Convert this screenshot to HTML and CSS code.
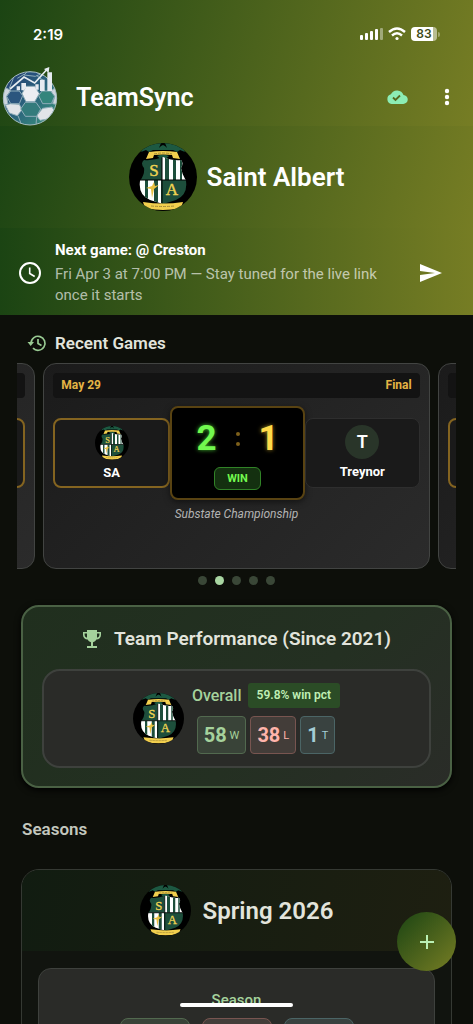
FILE: index.html
```html
<!DOCTYPE html>
<html lang="en">
<head>
  <meta charset="utf-8">
  <meta name="viewport" content="width=device-width, initial-scale=1">
  <title>TeamSync</title>
  <link rel="stylesheet" href="styles.css">
</head>
<body>

<div class="app">
  <header class="topbar">
    <div class="status">
      <span class="time">2:19</span>
      <div class="status-icons">
        <svg width="24" height="14" viewBox="0 0 24 14" fill="#fff"><rect x="1" y="8" width="3" height="5" rx="1"/><rect x="6" y="6" width="3" height="7" rx="1"/><rect x="11" y="4" width="3" height="9" rx="1"/><rect x="16" y="2" width="3" height="11" rx="1"/><rect x="21" y="1" width="3" height="12" rx="1" opacity=".4"/></svg>
        <svg width="18" height="14" viewBox="0 0 18 14" fill="none" stroke="#fff" stroke-width="2.4"><path d="M1 5 Q9 -2 17 5M4 8.500 Q9 4 14 8.500"/><circle cx="9" cy="11.500" r="1.600" fill="#fff" stroke="none"/></svg>
        <div class="battery"><span>83</span></div>
      </div>
    </div>
    <div class="appbar">
      <svg class="ball" viewBox="0 6 192 192" aria-label="TeamSync logo">
        <defs>
          <linearGradient id="ball-fill" x1="0" y1="0" x2="1" y2="1"><stop offset="0" stop-color="#233a72"/><stop offset=".5" stop-color="#2a627c"/><stop offset="1" stop-color="#3d9a7c"/></linearGradient>
          <clipPath id="ball-clip"><circle cx="90" cy="106" r="80"/></clipPath>
        </defs>
        <circle cx="90" cy="106" r="80" fill="url(#ball-fill)"/>
        <g clip-path="url(#ball-clip)" stroke="#8fadb9" stroke-width="3" stroke-linejoin="round">
          <path d="M8 70l24 12-12 18 4 24-16 4zM172 70l-20 14 12 18-6 20 20 4z" fill="#cdd5de"/>
          <path d="M32 122l26 2 8 16-14 18-24-8-12-24zM128 136l28-4 6 10-18 26-24 4-10-14z" fill="#e1e4e8"/>
          <path d="M78 70h26l14 22-14 24H78L66 92z" fill="#eceef2"/>
          <path d="M32 84h26l10 14-10 24H32L20 100z" fill="#2b567e"/>
          <path d="M126 84h26l12 16-10 22h-26l-12-24z" fill="#34857c"/>
          <path d="M76 118h32l14 20-12 22H76l-14-22z" fill="#337b7c"/>
          <path d="M54 158l10 26M110 160l-2 26M52 46l20-12 36 2 24 18M40 46l-12 30" fill="none"/>
          <path d="M72 36l10-10h24l14 8-14 6z" fill="#27517c"/>
        </g>
        <circle cx="90" cy="106" r="80" fill="none" stroke="#a6bcc0" stroke-width="3"/>
        <path d="M50 70h10v12H50zM64 60h14v14l-6 8h-8zM106 64h10v16h-10zM120 50h14v34h-14zM142 28h14v56h-14z" fill="#e5eaf0"/>
        <path d="M30 78L72 42l32 18 38-42" fill="none" stroke="#e6ecf0" stroke-width="5"/>
        <path d="M132 18l16-6-2 18z" fill="#e6ecf0"/>
      </svg>
      <h1 class="app-name">TeamSync</h1>
      <button class="icon-btn" aria-label="Synced">
        <svg width="22" height="16" viewBox="0 0 22 16"><path d="M5.500 15a5 5 0 0 1-.6-9.700A6.800 6.800 0 0 1 17.500 6 4.500 4.500 0 0 1 17 15z" fill="#8cedb5"/><path d="M7 8.500l2.500 2.500 4.500-4.500" fill="none" stroke="#566a20" stroke-width="1.800"/></svg>
      </button>
      <button class="icon-btn" aria-label="More">
        <svg width="6" height="18" viewBox="0 0 6 18" fill="#fff"><circle cx="3" cy="3" r="2.200"/><circle cx="3" cy="9" r="2.200"/><circle cx="3" cy="15" r="2.200"/></svg>
      </button>
    </div>
  </header>

  <section class="team">
    <svg class="crest-lg" viewBox="0 0 68 68">
      <defs>
        <clipPath id="crest-round"><circle cx="34" cy="34" r="34"/></clipPath>
        <clipPath id="crest-shield"><path d="M15 17 Q24 18 34 14 Q44 18 52 17 Q55 20 52 25 Q53 31 57 38 Q59 52 47 57 L34 61 L21 57 Q9 52 11 38 Q16 31 15 25 Q11 20 15 17Z"/></clipPath>
      </defs>
      <g id="crest" clip-path="url(#crest-round)">
        <rect width="68" height="68" fill="#000"/>
        <path d="M12 9 L17 0 H51 L56 9 L51 7 L48 9 L44 7 H24 L20 9 L17 7Z" fill="#1d5942"/>
        <path d="M30 5 L32 0 H36 L38 5 L36 3 L34 2 L32 3Z" fill="#000"/>
        <path d="M28 13 Q34 10 40 13 L34 18Z" fill="#1d5942"/>
        <g clip-path="url(#crest-shield)">
          <rect x="8" y="12" width="26" height="25" fill="#1d4e3b"/>
          <rect x="33" y="12" width="26" height="25" fill="#fff"/>
          <path d="M36 12h4v25h-4zM44 12h3v25h-3zM51 12h2v25h-2z" fill="#1d4e3b"/>
          <rect x="8" y="37" width="26" height="26" fill="#fff"/>
          <path d="M16 37h3v26h-3zM25 37h4v26h-4zM32 37h2v26h-2z" fill="#1d4e3b"/>
          <rect x="33" y="37" width="26" height="26" fill="#1d4e3b"/>
          <path d="M8 37H60M33 12V62" stroke="#000" stroke-width="1"/>
        </g>
        <path d="M17 45 L23 43 L25 39 L26 43 L30 42 L25 46 L23 55 L22 46Z" fill="#e8c040"/>
        <path d="M17 16 L20 9 Q34 7 48 9 L51 16 L44 15 L43 12 Q34 11 25 12 L24 15Z" fill="#f2cf4e"/>
        <path d="M14 59 Q34 62 54 59 L52 65 Q34 69 16 65Z" fill="#f2cf4e"/>
        <path d="M22 63 Q34 64 46 63M25 11 Q34 9 43 11" fill="none" stroke="#a38b3a" stroke-dasharray="3 1"/>
        <text x="25" y="33" class="crest-letter">S</text>
        <text x="43" y="52" class="crest-letter">A</text>
      </g>
    </svg>
    <h2>Saint Albert</h2>
  </section>

  <section class="next">
    <svg class="clock" viewBox="0 0 24 24" fill="none" stroke="#fff" stroke-width="2"><circle cx="12" cy="12" r="10"/><path d="M11.700 6.500v6l5 3" stroke-width="1.600"/></svg>
    <div class="next-text">
      <strong>Next game: @ Creston</strong>
      <p>Fri Apr 3 at 7:00 PM — Stay tuned for the live link once it starts</p>
    </div>
    <button class="icon-btn send" aria-label="Send">
      <svg width="24" height="20" viewBox="0 0 24 20"><path d="M1 19l22-9L1 1v7l15 2-15 2z" fill="#fff"/></svg>
    </button>
  </section>

  <main class="content">
    <div class="section-title">
      <svg width="20" height="18" viewBox="0 0 20 18" fill="none" stroke="#99cb93" stroke-width="1.700"><path d="M4 9a7 7 0 1 1 2 5.200"/><path d="M0.500 8h6.500L3.700 12z" fill="#99cb93" stroke="none"/><path d="M11 5v4.500l3.500 2"/></svg>
      <h3>Recent Games</h3>
    </div>

    <div class="carousel">
      <article class="game">
        <div class="game-head"></div>
        <div class="match"><div class="side winner"></div><div class="side winner"></div></div>
      </article>
      <article class="game">
        <div class="game-head"><span>May 29</span><span>Final</span></div>
        <div class="match">
          <div class="side winner">
            <svg class="crest-sm" viewBox="0 0 68 68"><use href="#crest"/></svg>
            <b>SA</b>
          </div>
          <div class="scoreboard">
            <div class="score"><span class="ours">2</span><span class="colon"><i></i><i></i></span><span class="theirs">1</span></div>
            <span class="result">WIN</span>
          </div>
          <div class="side">
            <span class="initial">T</span>
            <b>Treynor</b>
          </div>
        </div>
        <p class="note">Substate Championship</p>
      </article>
      <article class="game">
        <div class="game-head"></div>
        <div class="match"><div class="side winner"></div><div class="side"></div></div>
      </article>
    </div>
    <div class="dots"><i></i><i class="on"></i><i></i><i></i><i></i></div>

    <section class="performance">
      <div class="perf-title">
        <svg width="20" height="20" viewBox="0 0 20 20"><path d="M5 1h10v2h4v3a4.500 4.500 0 0 1-4.600 4.500A5 5 0 0 1 11 13.300V17h4v2H5v-2h4v-3.700A5 5 0 0 1 5.600 10.500 4.500 4.500 0 0 1 1 6V3h4zM2.600 4.600V6A2.800 2.800 0 0 0 5 8.700V4.600zM17.400 4.600H15v4.100A2.800 2.800 0 0 0 17.400 6z" fill="#a5d29c" fill-rule="evenodd"/></svg>
        <h3>Team Performance (Since 2021)</h3>
      </div>
      <div class="overall">
        <svg class="crest-md" viewBox="0 0 68 68"><use href="#crest"/></svg>
        <div class="record">
          <div class="record-head"><span>Overall</span><span class="pct">59.8% win pct</span></div>
          <div class="tiles">
            <span class="tile win"><b>58</b>W</span>
            <span class="tile loss"><b>38</b>L</span>
            <span class="tile tie"><b>1</b>T</span>
          </div>
        </div>
      </div>
    </section>

    <h3 class="seasons-title">Seasons</h3>

    <section class="season">
      <div class="season-head">
        <svg class="crest-md" viewBox="0 0 68 68"><use href="#crest"/></svg>
        <h2>Spring 2026</h2>
      </div>
      <div class="season-card">
        <span>Season</span>
        <div class="season-tiles"><i class="win"></i><i class="loss"></i><i class="tie"></i></div>
      </div>
    </section>
  </main>

  <button class="fab" aria-label="Add">
    <svg width="16" height="16" viewBox="0 0 16 16" stroke="#baf0b4" stroke-width="2"><path d="M8 1v14M1 8h14"/></svg>
  </button>
  <div class="home-bar"></div>
</div>

</body>
</html>
```
FILE: styles.css
```css
* {
  box-sizing: border-box;
}
body {
  margin: 0;
  background: #0d0f0a;
  color: #e2e4dc;
  font-family: Roboto, "Liberation Sans", sans-serif;
  font-size: 14px;
}
h1, h2, h3, p {
  margin: 0;
  font-weight: 600;
}
button {
  border: 0;
  padding: 0;
  background: none;
}
svg {
  display: block;
  flex: none;
}
.crest-letter {
  font: 400 17px "Liberation Serif", serif;
  fill: #f0d452;
  stroke: #f0d452;
  stroke-width: 0.4;
  text-anchor: middle;
}

.app {
  height: 100vh;
  display: flex;
  flex-direction: column;
  overflow: hidden;
}

/* header */
.topbar {
  background: linear-gradient(105deg, #1b4413, #767d24);
}
.status {
  display: flex;
  justify-content: space-between;
  align-items: center;
  height: 68px;
  padding: 0 33px;
}
.time {
  font: 600 15px Inter, sans-serif;
  color: #fff;
}
.status-icons {
  display: flex;
  align-items: center;
  gap: 5px;
}
.battery {
  display: flex;
  align-items: center;
  gap: 1px;
}
.battery span {
  width: 26px;
  height: 14px;
  border-radius: 4px;
  background: linear-gradient(90deg, #fff 83%, #b9bd92 83%);
  color: #3c4a16;
  font: 600 12px/14px Inter, sans-serif;
  text-align: center;
}
.battery::after {
  content: "";
  width: 2px;
  height: 5px;
  border-radius: 0 2px 2px 0;
  background: #a0a56b;
}
.appbar {
  display: flex;
  align-items: center;
  height: 58px;
  padding-right: 4px;
}
.ball {
  width: 64px;
  height: 64px;
}
.app-name {
  flex: 1;
  padding-left: 12px;
  color: #fff;
  font-size: 25px;
}
.icon-btn {
  display: grid;
  place-items: center;
  width: 44px;
  height: 48px;
}
.icon-btn + .icon-btn {
  margin-left: 6px;
}
.team {
  display: flex;
  justify-content: center;
  align-items: center;
  gap: 10px;
  height: 102px;
  background: linear-gradient(105deg, #1b4413, #767d24);
}
.team h2 {
  color: #fff;
  font-size: 26px;
}
.crest-lg {
  width: 68px;
  height: 68px;
}
.next {
  display: flex;
  align-items: center;
  gap: 13px;
  padding: 12px 18px 9px;
  background: linear-gradient(90deg, #1b4413, #767d24);
}
.clock {
  width: 24px;
  height: 24px;
}
.next-text {
  flex: 1;
  color: #fff;
  font-size: 15px;
  line-height: 21px;
}
.next-text p {
  margin-top: 3px;
  color: rgba(255, 255, 255, 0.65);
  font-weight: 400;
}
.send {
  width: 48px;
}

/* recent games */
.content {
  flex: 1;
  min-height: 0;
  overflow: hidden;
}
.section-title {
  display: flex;
  align-items: center;
  gap: 8px;
  padding: 18px 27px 10px;
}
.section-title h3 {
  font-size: 17px;
  line-height: 20px;
}
.carousel {
  display: flex;
  justify-content: center;
  gap: 8px;
  margin: 0 17px;
  overflow: hidden;
}
.game {
  flex: 0 0 88%;
  height: 206px;
  padding: 9px;
  border: 1px solid #424442;
  border-radius: 13px;
  background: linear-gradient(135deg, #1b1b1b, #2b2b2b);
}
.game-head {
  display: flex;
  justify-content: space-between;
  height: 25px;
  padding: 0 8px;
  border-radius: 4px;
  background: #131313;
  color: #e4b445;
  font-size: 12px;
  font-weight: 700;
  line-height: 25px;
}
.match {
  display: flex;
  align-items: center;
  height: 109px;
}
.side {
  flex: 1;
  display: flex;
  flex-direction: column;
  align-items: center;
  gap: 5px;
  height: 70px;
  padding-top: 6px;
  border: 1px solid #2e2e2e;
  border-radius: 8px;
  background: #1a1a1a;
  color: #fff;
  font-size: 13px;
}
.side.winner {
  border: 2px solid #846420;
}
.crest-sm,
.initial {
  width: 34px;
  height: 34px;
}
.initial {
  border-radius: 50%;
  background: #293529;
  font-size: 18px;
  font-weight: 600;
  line-height: 34px;
  text-align: center;
}
.scoreboard {
  width: 135px;
  height: 94px;
  padding: 11px 0;
  border: 2px solid #594312;
  border-radius: 8px;
  background: #000;
  box-shadow: 0 2px 6px rgba(0, 0, 0, 0.5);
  text-align: center;
}
.score {
  display: flex;
  justify-content: center;
  align-items: center;
  gap: 19px;
  height: 40px;
  font: 700 35px/40px Roboto, sans-serif;
}
.ours {
  color: #72f94f;
  text-shadow: 0 0 4px #42b82e;
}
.theirs {
  color: #ffdb49;
  text-shadow: 0 0 4px #a5891f;
}
.colon i {
  display: block;
  width: 4px;
  height: 4px;
  margin: 6px 0;
  border-radius: 50%;
  background: #7e601b;
}
.result {
  display: inline-block;
  padding: 0 12px;
  margin-top: 8px;
  border: 1px solid #318327;
  border-radius: 6px;
  background: #143010;
  color: #72f94f;
  font-size: 11px;
  font-weight: 700;
  line-height: 21px;
}
.note {
  color: #b3b3b3;
  font-size: 12px;
  font-style: italic;
  font-weight: 400;
  text-align: center;
}
.dots {
  display: flex;
  justify-content: center;
  gap: 8px;
  padding: 7px 0 8px;
}
.dots i {
  width: 9px;
  height: 9px;
  border-radius: 50%;
  background: #3a4737;
}
.dots .on {
  background: #a9d6a2;
}

/* performance */
.performance {
  margin: 12px 21px 0;
  padding: 20px 19px 18px;
  border: 2px solid #4a6144;
  border-radius: 18px;
  background: linear-gradient(135deg, #202f1e, #243022 60%, #2a2c28);
  box-shadow: 0 2px 6px #000;
}
.perf-title {
  display: flex;
  justify-content: center;
  align-items: center;
  gap: 12px;
  line-height: 24px;
}
.perf-title h3 {
  font-size: 19px;
}
.overall {
  display: flex;
  justify-content: center;
  align-items: center;
  gap: 8px;
  height: 99px;
  margin-top: 18px;
  border: 2px solid #3e413d;
  border-radius: 18px;
  background: #2a2b28;
}
.crest-md {
  width: 51px;
  height: 51px;
}
.record {
  display: flex;
  flex-direction: column;
  align-items: center;
  gap: 8px;
}
.record-head {
  display: flex;
  align-items: center;
  gap: 6px;
  color: #a5d29c;
  font-size: 16px;
  font-weight: 500;
}
.pct {
  padding: 0 9px;
  border-radius: 3px;
  background: #2b4c26;
  color: #c0efb5;
  font-size: 12px;
  font-weight: 600;
  line-height: 25px;
}
.tiles {
  display: flex;
  gap: 4px;
}
.tile {
  display: flex;
  align-items: center;
  gap: 3px;
  height: 38px;
  padding: 0 6px;
  border: 1px solid;
  border-radius: 4px;
  font-size: 11px;
}
.tile b {
  font-size: 20px;
}
.win {
  border-color: #52694f;
  background: #394338;
  color: #a5d29c;
}
.loss {
  border-color: #785550;
  background: #433d39;
  color: #ffb4ab;
}
.tie {
  border-color: #4b6566;
  background: #394240;
  color: #a4cdd5;
}

/* seasons */
.seasons-title {
  padding: 31px 22px 30px;
  color: #c3c7be;
  font-size: 17px;
  line-height: 20px;
}
.season {
  margin: 0 21px;
  border: 1px solid #353933;
  border-radius: 18px 18px 0 0;
  background: #11140f;
  overflow: hidden;
}
.season-head {
  display: flex;
  justify-content: center;
  align-items: center;
  gap: 12px;
  height: 81px;
  background: linear-gradient(105deg, #111c11, #1e1f11);
}
.season-head h2 {
  font-size: 24px;
}
.season-card {
  margin: 17px 16px 0;
  padding-top: 22px;
  border: 1px solid #3e413d;
  border-radius: 13px;
  background: #2a2b28;
  color: #a5d29c;
  font-size: 15px;
  font-weight: 500;
  line-height: 18px;
  text-align: center;
}
.season-tiles {
  display: flex;
  justify-content: center;
  gap: 12px;
  margin-top: 9px;
}
.season-tiles i {
  width: 70px;
  height: 40px;
  border: 1px solid;
  border-radius: 8px;
}
.season-tiles .win {
  border-color: #52694f;
}
.season-tiles .loss {
  border-color: #785550;
}
.season-tiles .tie {
  border-color: #4b6566;
}

/* floating over the list */
.fab {
  position: fixed;
  right: 17px;
  bottom: 53px;
  display: grid;
  place-items: center;
  width: 59px;
  height: 59px;
  border-radius: 50%;
  background: linear-gradient(135deg, #1b4413, #767d24);
}
.home-bar {
  position: fixed;
  left: 38%;
  right: 38%;
  bottom: 17px;
  height: 4px;
  border-radius: 2px;
  background: #fff;
}
```
